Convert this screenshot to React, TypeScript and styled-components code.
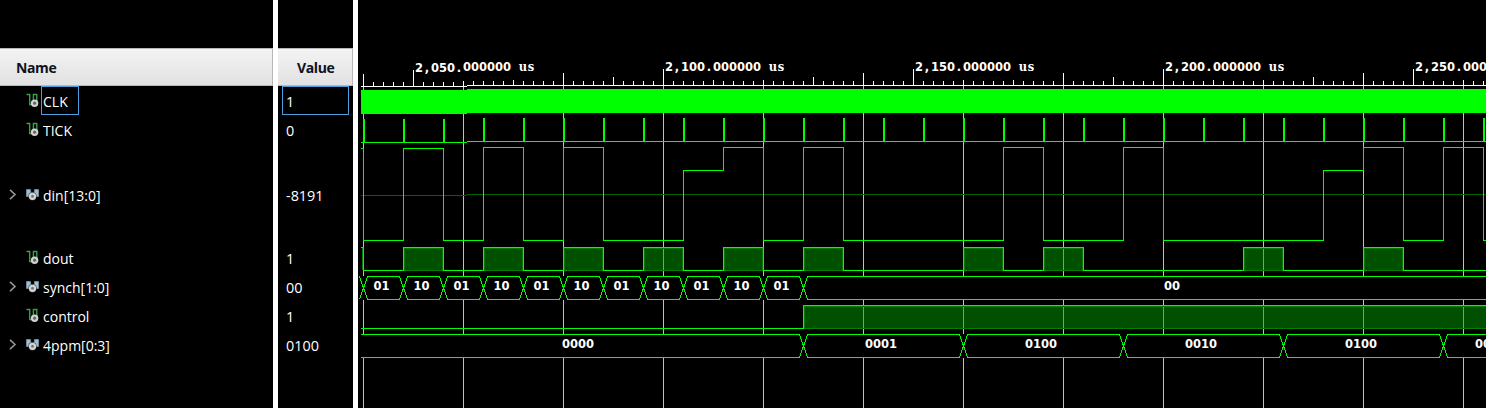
import React from "react";
import styled, { createGlobalStyle } from "styled-components";

const Global = createGlobalStyle`
  *{box-sizing:border-box}
  body{margin:0;background:#fff;overflow:hidden}
`;

const Viewer = styled.main`
  display: grid;
  grid-template-columns: 273px 75px 1fr;
  column-gap: 5px;
  width: 1486px;
  height: 408px;
  background: #fff;
  font: 14px "Open Sans", "Noto Sans", sans-serif;
  overflow: hidden;
`;
const Panel = styled.section`
  background: #000;
  color: #fff;
  padding-top: 48px;
  min-width: 0;
`;
const Header = styled.header<{ $pad: number }>`
  height: 38px;
  padding: 1px 0 0 ${(p) => p.$pad}px;
  display: flex;
  align-items: center;
  color: #101020;
  font-weight: 700;
  font-size: 14px;
  letter-spacing: -0.4px;
  background: linear-gradient(#f3f3f3, #e1e1e3);
  border: solid #b8b8b8;
  border-width: 1px 1px 1px 0;
`;
const Row = styled.div<{ $tall: boolean }>`
  height: ${(p) => (p.$tall ? 99 : 29)}px;
  padding-top: ${(p) => (p.$tall ? 2 : 0)}px;
  display: flex;
  align-items: center;
`;
const Arrow = styled.span`
  width: 26px;
  padding-left: 9px;
  display: flex;
`;
const IconBox = styled.span`
  width: 15px;
  display: flex;
`;
const Label = styled.span<{ $focus?: boolean; $w: number }>`
  width: ${(p) => p.$w}px;
  height: 29px;
  line-height: 29px;
  padding-left: 1px;
  border: 1px solid ${(p) => (p.$focus ? "#4a9fe0" : "transparent")};
  white-space: nowrap;
`;
const ValueLabel = styled(Label)`
  margin-left: 4px;
  padding-left: 3px;
  font-size: 14.4px;
`;
const WavePanel = styled.section`
  background: #000;
  height: 408px;
`;
const Canvas = styled.svg`
  display: block;
`;

const ScalarIcon = () => (
  <svg width="13" height="15" viewBox="0 0 13 15" fill="none">
    <path d="M0.5 1.5H3.7V11.5H6M7.4 9V1.5H10.8V8" stroke="#36a04b" strokeWidth="1.4" />
    <circle cx="8.6" cy="10.2" r="3.7" fill="#d2d2d2" />
    <circle cx="8.6" cy="10.2" r="1.6" fill="#666" />
  </svg>
);
const BusIcon = () => (
  <svg width="13" height="15" viewBox="0 0 13 15" fill="none">
    <path d="M0.5 2.5H4.5V4.5L6.5 6L8.5 4.5V2.5H12.5V9.5H0.5Z" fill="#96c3dc" stroke="#7f93a0" strokeWidth="0.8" />
    <circle cx="6.5" cy="9.3" r="4.2" fill="#444" />
    <circle cx="6.5" cy="9.3" r="3.6" fill="#d6d6d6" />
    <circle cx="6.5" cy="9.3" r="1.5" fill="#777" />
  </svg>
);
const Chevron = () => (
  <svg width="8" height="11" viewBox="0 0 8 11" fill="none">
    <path d="M1 0.8L6 5.5L1 10.2" stroke="#949494" strokeWidth="1.6" />
  </svg>
);

const signals = [
  { name: "CLK", value: "1", bus: false },
  { name: "TICK", value: "0", bus: false },
  { name: "din[13:0]", value: "-8191", bus: true, tall: true },
  { name: "dout", value: "1", bus: false },
  { name: "synch[1:0]", value: "00", bus: true },
  { name: "control", value: "1", bus: false },
  { name: "4ppm[0:3]", value: "0100", bus: true },
];

const X0 = 358;
const END = 1486;
const range = (from: number, to: number, step: number) => {
  const out: number[] = [];
  for (let x = from; x <= to; x += step) out.push(x);
  return out;
};
const GRID = range(363, END, 100);
const G = "#00ff00";

const majorTop: Record<number, number> = {};
range(413, END, 250).forEach((x) => (majorTop[x] = 69));
[363, 563, 863, 1063, 1363].forEach((x) => (majorTop[x] = 73));
[613, 813, 1113, 1313].forEach((x) => (majorTop[x] = 77));
const tickTop = (x: number) => majorTop[x] ?? ((x - 413) % 50 === 0 ? 80 : 81);

const DIN: [number, number][] = [
  [363, 240], [403, 147], [443, 240], [483, 147], [523, 240], [563, 147],
  [603, 240], [683, 170], [723, 147], [763, 240], [803, 147], [843, 240],
  [1003, 147], [1043, 240], [1123, 147], [1163, 240], [1323, 170],
  [1363, 147], [1403, 240], [1443, 147], [1483, 240],
];
const stepPath = (start: number, pts: [number, number][]) =>
  `M361 ${start + 0.5}` + pts.map(([x, y]) => `H${x + 0.5}V${y + 0.5}`).join("") + `H${END}`;

const CELL = 8;
const Glyphs = styled.text<{ $serif?: boolean }>`
  fill: #fff;
  font-family: ${(p) =>
    p.$serif
      ? `"DejaVu Serif Condensed", "DejaVu Serif", serif`
      : `"DejaVu Sans Condensed", "DejaVu Sans", sans-serif`};
  font-stretch: condensed;
  font-weight: 700;
  font-size: 12.8px;
  text-anchor: middle;
`;
const Fixed = ({ x, y, text, serif }: { x: number; y: number | number[]; text: string; serif?: boolean }) => (
  <Glyphs
    $serif={serif}
    x={text.split("").map((_, i) => x + (i + 0.5) * CELL).join(" ")}
    y={Array.isArray(y) ? y.join(" ") : y}
  >
    {text}
  </Glyphs>
);

const Pulse = ({ x, w, top }: { x: number; w: number; top: number }) => (
  <g>
    <rect x={x} y={top} width={w + 1} height={24} fill="#00a000" fillOpacity={0.5} />
    <path d={`M${x + 1.5} ${top + 23.5}V${top + 1.5}H${x + w - 0.5}V${top + 23.5}Z`} stroke="#008000" fill="none" />
    <path d={`M${x + 0.5} ${top + 24}V${top + 0.5}H${x + w + 0.5}V${top + 24}`} stroke={G} fill="none" />
  </g>
);

const Upper = () => (
  <g>
    <path d={GRID.map((x) => `M${x + 0.5} 86V246`).join("")} stroke="#c0c0c0" />
    <path d={range(363, END, 10).map((x) => `M${x + 0.5} ${tickTop(x)}V86`).join("") + `M361 85.5H${END}`} stroke="#fff" />
    <rect x={361} y={89} width={END - 361} height={24} fill={G} />
    <path d={`M361 141.5H${END}`} stroke={G} />
    <path d={range(363, END, 40).map((x) => `M${x + 1} 118V142`).join("")} stroke={G} strokeWidth={2} />
    <path d={`M361 194.5H${END}`} stroke="#006400" />
    <path d={stepPath(147, DIN)} stroke={G} fill="none" />
  </g>
);

const Bus = ({ top, edges }: { top: number; edges: number[] }) => {
  const t = top + 0.5;
  const b = top + 23.5;
  const hs = [...edges, END + 10];
  return (
    <g stroke={G} fill="none">
      <rect x={361} y={top} width={END - 361} height={24} fill="#000" stroke="none" />
      {edges[0] > 363 && <path d={`M361 ${t}H${edges[0] - 3.5}M361 ${b}H${edges[0] - 3.5}`} />}
      {edges.map((x, i) => (
        <path
          key={x}
          d={`M${x - 3.5} ${t}L${x + 4.5} ${b}H${hs[i + 1] - 3.5}M${x - 3.5} ${b}L${x + 4.5} ${t}H${hs[i + 1] - 3.5}`}
        />
      ))}
    </g>
  );
};

const synchEdges = range(363, 803, 40);
const ppmEdges = [803, 963, 1123, 1283, 1443];
const rulerLabels = ["2,050", "2,100", "2,150", "2,200", "2,250"];

export default function App() {
  return (
    <>
      <Global />
      <Viewer>
        <Panel>
          <Header $pad={16}>Name</Header>
          {signals.map((s, i) => (
            <Row key={s.name} $tall={!!s.tall}>
              <Arrow>{s.bus && <Chevron />}</Arrow>
              <IconBox>{s.bus ? <BusIcon /> : <ScalarIcon />}</IconBox>
              <Label $w={i === 0 ? 38 : 120} $focus={i === 0}>{s.name}</Label>
            </Row>
          ))}
        </Panel>
        <Panel>
          <Header $pad={19}>Value</Header>
          {signals.map((s, i) => (
            <Row key={s.name} $tall={!!s.tall}>
              <ValueLabel $w={67} $focus={i === 0}>{s.value}</ValueLabel>
            </Row>
          ))}
        </Panel>
        <WavePanel>
          <Canvas width={1128} height={408} viewBox={`${X0} 0 1128 408`} shapeRendering="crispEdges">
            <defs>
              <clipPath id="near"><rect x={358} y={0} width={109} height={230} /></clipPath>
              <clipPath id="far"><path d="M467 0H1486V408H358V230H467Z" /></clipPath>
            </defs>
            <path d={GRID.map((x) => `M${x + 0.5} 240V408`).join("")} stroke="#c0c0c0" />
            <g clipPath="url(#near)"><g transform="translate(0 1)"><Upper /></g></g>
            <g clipPath="url(#far)"><Upper /></g>
            {rulerLabels.map((l, i) => {
              const text = l + ".000000";
              return (
                <g key={l}>
                  <Fixed
                    x={415 + i * 250}
                    y={text.split("").map((_, k) => (i === 0 && k < 6 ? 72 : 71))}
                    text={text}
                  />
                  {i < 4 && <Fixed x={415 + i * 250 + 13 * CELL} y={71} text="us" serif />}
                </g>
              );
            })}
            <path d={`M361 247.5H363.5V270.5H${END}`} stroke={G} fill="none" />
            <path d="M362.5 248V270" stroke="#008000" />
            {[403, 483, 563, 643, 723, 803, 963, 1043, 1243, 1363].map((x) => (
              <Pulse key={x} x={x} w={40} top={247} />
            ))}
            <Bus top={276} edges={synchEdges} />
            {synchEdges.slice(0, -1).map((x, i) => (
              <Fixed key={x} x={x + 10.5} y={290} text={i % 2 ? "10" : "01"} />
            ))}
            <Fixed x={1164} y={290} text="00" />
            <path d="M361 328.5H803" stroke={G} />
            <Pulse x={803} w={700} top={305} />
            <Bus top={334} edges={ppmEdges} />
            <Fixed x={562} y={348} text="0000" />
            <Fixed x={865} y={348} text="0001" />
            <Fixed x={1025} y={348} text="0100" />
            <Fixed x={1185} y={348} text="0010" />
            <Fixed x={1345} y={348} text="0100" />
            <Fixed x={1475} y={348} text="00" />
          </Canvas>
        </WavePanel>
      </Viewer>
    </>
  );
}
